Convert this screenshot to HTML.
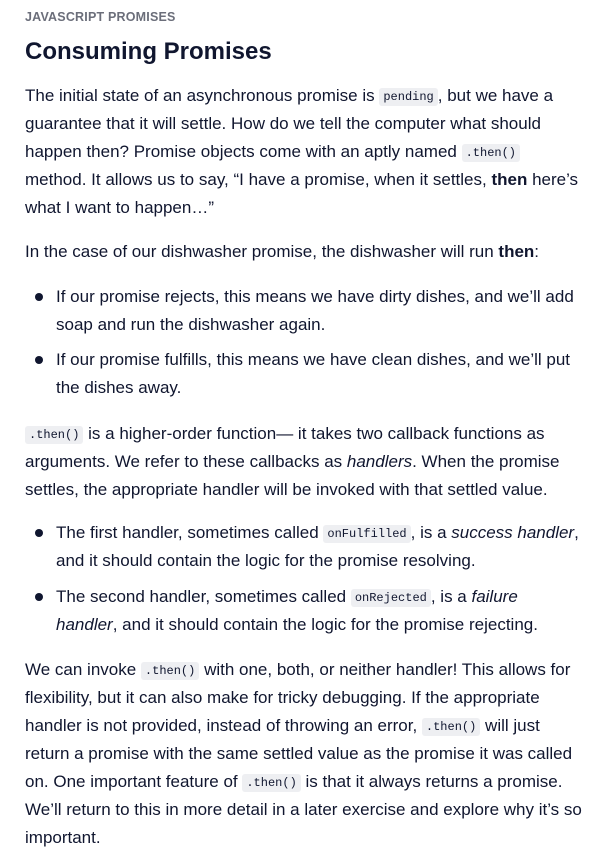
<!DOCTYPE html>
<html><head><meta charset="utf-8"><style>
body{margin:0;background:#fff;color:#10162f;font-family:"Liberation Sans",sans-serif;width:610px;height:868px;overflow:hidden}
.w{position:absolute;left:25px;top:0;width:580px}
.lbl{position:absolute;top:10px;font-size:12.5px;font-weight:bold;color:#6b6e7a;letter-spacing:.2px}
h1{position:absolute;top:38px;margin:0;font-size:24px;font-weight:bold}
.t{position:absolute;left:0;font-size:17px;line-height:28px;white-space:nowrap}
.li{left:31px}
.li::before{content:"";position:absolute;left:-21px;top:10px;width:8px;height:8px;border-radius:50%;background:#10162f}
code{display:inline-block;line-height:16px;vertical-align:1px;font-family:"Liberation Mono",monospace;font-size:12px;background:#eeeff2;border-radius:3px;padding:1px 4px}
</style></head><body><div class="w">
<div class="lbl">JAVASCRIPT PROMISES</div>
<h1>Consuming Promises</h1>
<div class="t" style="top:82px">The initial state of an asynchronous promise is <code>pending</code>, but we have a<br>guarantee that it will settle. How do we tell the computer what should<br>happen then? Promise objects come with an aptly named <code>.then()</code><br>method. It allows us to say, “I have a promise, when it settles, <b>then</b> here’s<br>what I want to happen…”</div>
<div class="t" style="top:238px">In the case of our dishwasher promise, the dishwasher will run <b>then</b>:</div>
<div class="t li" style="top:283px">If our promise rejects, this means we have dirty dishes, and we’ll add<br>soap and run the dishwasher again.</div>
<div class="t li" style="top:346px">If our promise fulfills, this means we have clean dishes, and we’ll put<br>the dishes away.</div>
<div class="t" style="top:420px"><code>.then()</code> is a higher-order function— it takes two callback functions as<br>arguments. We refer to these callbacks as <i>handlers</i>. When the promise<br>settles, the appropriate handler will be invoked with that settled value.</div>
<div class="t li" style="top:519px">The first handler, sometimes called <code>onFulfilled</code>, is a <i>success handler</i>,<br>and it should contain the logic for the promise resolving.</div>
<div class="t li" style="top:583px">The second handler, sometimes called <code>onRejected</code>, is a <i>failure<br>handler</i>, and it should contain the logic for the promise rejecting.</div>
<div class="t" style="top:656px">We can invoke <code>.then()</code> with one, both, or neither handler! This allows for<br>flexibility, but it can also make for tricky debugging. If the appropriate<br>handler is not provided, instead of throwing an error, <code>.then()</code> will just<br>return a promise with the same settled value as the promise it was called<br>on. One important feature of <code>.then()</code> is that it always returns a promise.<br>We’ll return to this in more detail in a later exercise and explore why it’s so<br>important.</div>
</div></body></html>
